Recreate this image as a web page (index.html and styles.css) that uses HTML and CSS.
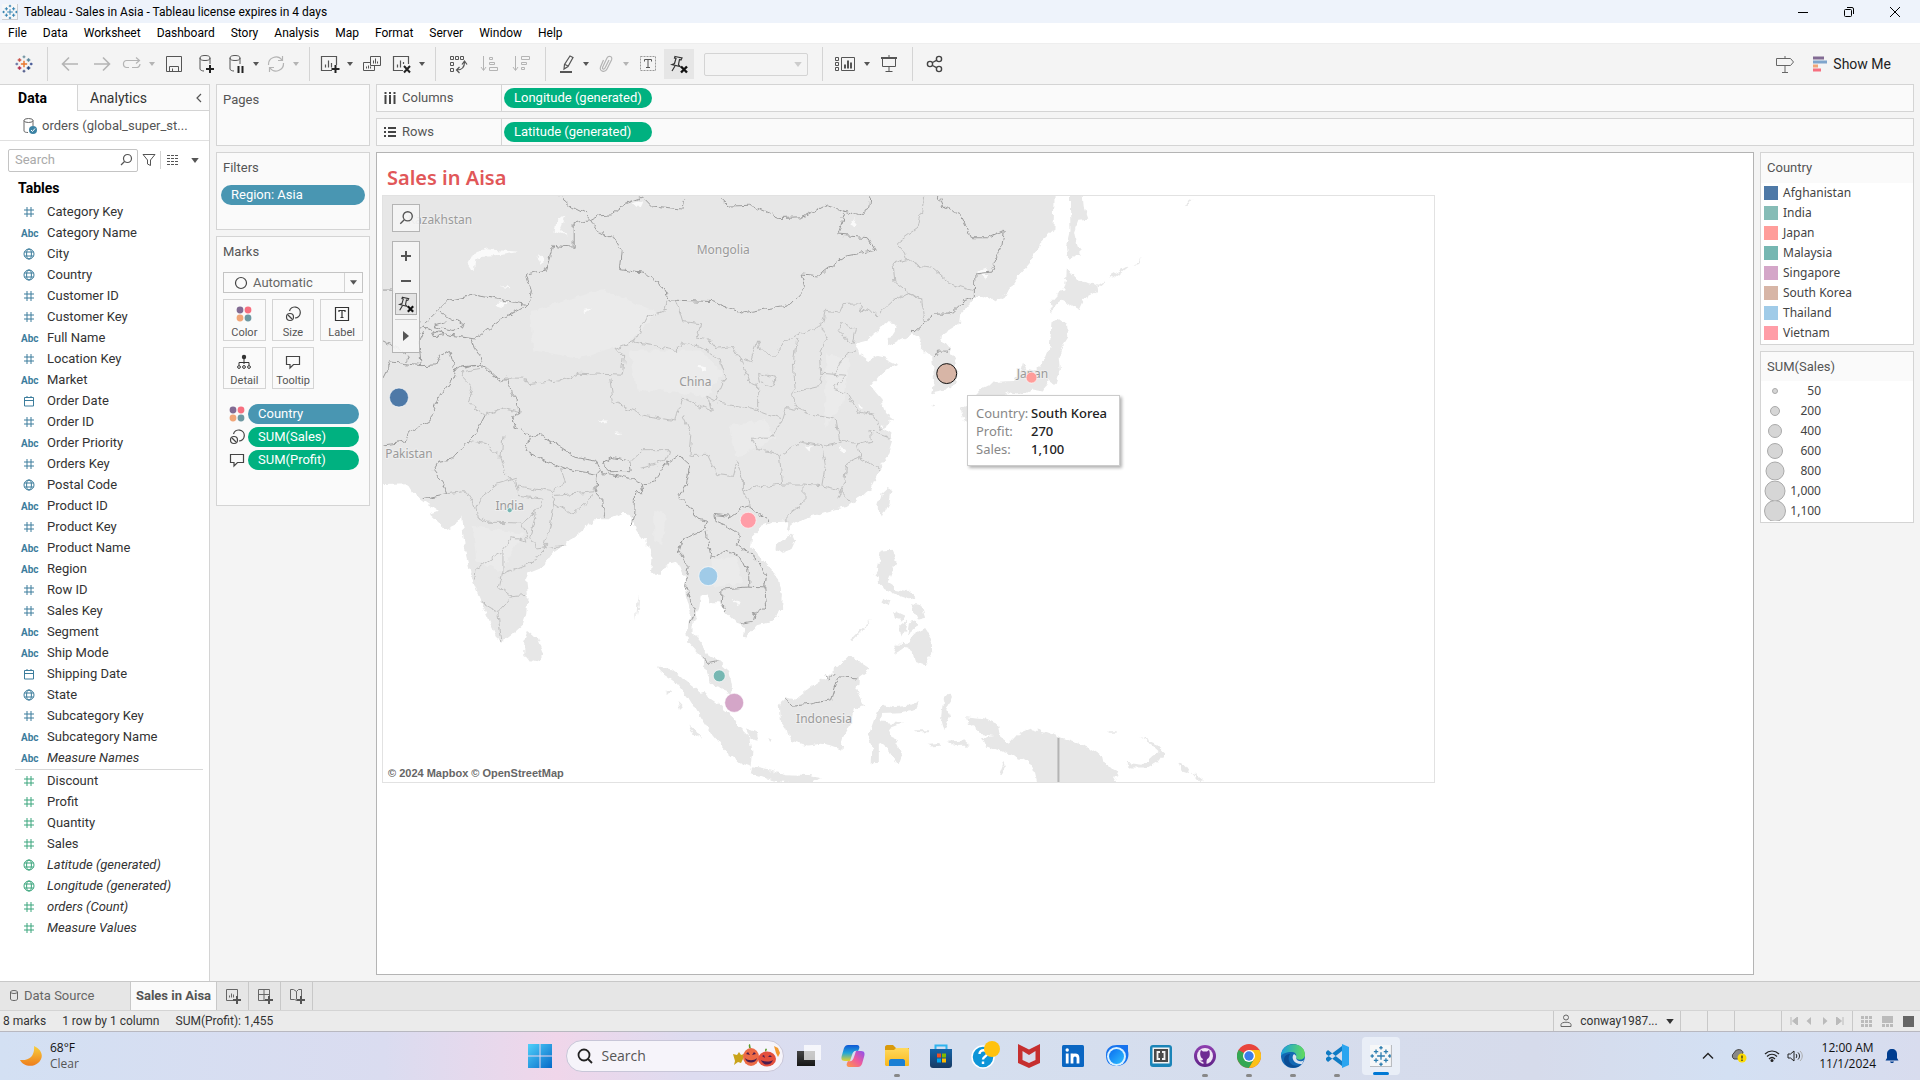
FILE: index.html
```html
<!DOCTYPE html>
<html lang="en">
<head>
<meta charset="utf-8">
<title>Tableau - Sales in Asia</title>
<link rel="stylesheet" href="styles.css">
</head>
<body>
<svg class="defs" aria-hidden="true">
  <defs>
    <linearGradient id="gWin" x1="0" y1="0" x2="1" y2="1"><stop offset="0" stop-color="#4fd0fa"/><stop offset="1" stop-color="#0669c8"/></linearGradient>
    <linearGradient id="gMoon" x1="0" y1="0" x2="0" y2="1"><stop offset="0" stop-color="#f8cf3c"/><stop offset="1" stop-color="#ee7d1c"/></linearGradient>
    <linearGradient id="gBag" x1="0" y1="0" x2="0" y2="1"><stop offset="0" stop-color="#1464a8"/><stop offset="1" stop-color="#173a63"/></linearGradient>
    <linearGradient id="gFolder" x1="0" y1="0" x2="0" y2="1"><stop offset="0" stop-color="#ffd95c"/><stop offset="1" stop-color="#f9b81d"/></linearGradient>
    <linearGradient id="gCop1" x1="0" y1="0" x2="0" y2="1"><stop offset="0" stop-color="#0f57d6"/><stop offset=".5" stop-color="#22a6d8"/><stop offset="1" stop-color="#e6d32c"/></linearGradient>
    <linearGradient id="gCop2" x1="1" y1="0" x2="0" y2="1"><stop offset="0" stop-color="#8a51f0"/><stop offset=".5" stop-color="#ee5b9c"/><stop offset="1" stop-color="#ff9a44"/></linearGradient>
    <linearGradient id="gDark" x1="0" y1="0" x2="0" y2="1"><stop offset="0" stop-color="#444"/><stop offset="1" stop-color="#161616"/></linearGradient>
    <linearGradient id="gBlue" x1="0" y1="0" x2="1" y2="1"><stop offset="0" stop-color="#0a6cf0"/><stop offset="1" stop-color="#2fc0ff"/></linearGradient>
    <linearGradient id="gEdge" x1="0" y1="0" x2="1" y2="0"><stop offset="0" stop-color="#1b9fe0"/><stop offset="1" stop-color="#62dc5a"/></linearGradient>
    <linearGradient id="gGit" x1="0" y1="0" x2="0" y2="1"><stop offset="0" stop-color="#8f3fb0"/><stop offset="1" stop-color="#5f2387"/></linearGradient>
    <symbol id="i-num" viewBox="0 0 12 12"><path d="M4 1v10M8 1v10M1 4h10M1 8h10" fill="none" stroke="currentColor"/></symbol>
    <symbol id="i-geo" viewBox="0 0 12 12"><g fill="none" stroke="currentColor"><circle cx="6" cy="6" r="5"/><ellipse cx="6" cy="6" rx="2.4" ry="5"/><path d="M1.5 4h9M1.5 8h9"/></g></symbol>
    <symbol id="i-date" viewBox="0 0 12 12"><path d="M1.500 2.500h9v8.500h-9zM1.500 5.500h9M4 1v2M8 1v2" fill="none" stroke="currentColor"/></symbol>
    <symbol id="i-caret" viewBox="0 0 6 4"><path d="M0 0h6L3 4z" fill="currentColor"/></symbol>
    <symbol id="i-color" viewBox="0 0 16 16"><circle cx="4" cy="4" r="3.400" fill="#826b93"/><circle cx="12" cy="4" r="3.400" fill="#f76f7f"/><circle cx="4" cy="12" r="3.400" fill="#f1a678"/><circle cx="12" cy="12" r="3.400" fill="#6d98a2"/></symbol>
    <symbol id="i-size" viewBox="0 0 16 16"><g fill="none" stroke="#444" stroke-width="1.200"><path d="M4.500 5A5.500 5.500 0 1 1 10 12"/><circle cx="5" cy="11" r="3.500"/><path d="M3 9l4 4"/></g></symbol>
    <symbol id="i-tip" viewBox="0 0 16 16"><path d="M1.500 2.500h13v8H8.500l-3.500 3.500v-3.500H1.500z" fill="none" stroke="#444" stroke-width="1.200"/></symbol>
    <symbol id="i-pin" viewBox="0 0 20 20"><path d="M6 2.500l7 1.500-1 2-1.500-.5-1 5 1.500 2L3 10.500l2.500-1 1.500-5-1.500-.5zM6 12l-3 5" fill="none" stroke="#333" stroke-width="1.200"/><path d="M12 12.500l6 6M18 12.500l-6 6" stroke="#111" stroke-width="2.400"/></symbol>
    <symbol id="i-search" viewBox="0 0 14 14"><circle cx="8.500" cy="5.500" r="4" fill="none" stroke="currentColor" stroke-width="1.200"/><path d="M5.500 8.500L2 12" stroke="currentColor" stroke-width="1.200"/></symbol>
    <symbol id="i-tab" viewBox="0 0 20 20"><g stroke-width="1.600"><path d="M10 6.500v7M6.500 10h7" stroke="#e8762c"/><path d="M5 3.500v4M3 5.500h4" stroke="#c9544b"/><path d="M15 3.500v4M13 5.500h4" stroke="#5b879b"/><path d="M5 12.500v4M3 14.500h4" stroke="#b3304f"/><path d="M15 12.500v4M13 14.500h4" stroke="#27477d"/><path d="M10 .5v3M8.500 2h3" stroke="#7a99a6"/><path d="M10 16.500v3M8.500 18h3" stroke="#5c6692"/><path d="M2 8.500v3M.5 10h3" stroke="#6e7ba8"/><path d="M18 8.500v3M16.500 10h3" stroke="#4a5c9a"/></g></symbol>
    <symbol id="i-tabblue" viewBox="0 0 20 20"><rect width="20" height="20" fill="#f6f7f8"/><path d="M10 6.500v7M6.500 10h7M5.500 4v4M3.500 6h4M14.500 4v4M12.500 6h4M5.500 12v4M3.500 14h4M14.500 12v4M12.500 14h4M10 1v3M8.500 2.500h3M10 16v3M8.500 17.500h3M2 8.500v3M.5 10h3M18 8.500v3M16.500 10h3" stroke="#2f7fb0" stroke-width="1.200"/><path d="M19.500 0v19.500H0" fill="none" stroke="#b9bcc0"/></symbol>
    <filter id="rough" x="-2%" y="-2%" width="104%" height="104%"><feTurbulence type="fractalNoise" baseFrequency=".14" numOctaves="2" seed="4"/><feDisplacementMap in="SourceGraphic" scale="7" xChannelSelector="R" yChannelSelector="G"/></filter>
  </defs>
</svg>

<header class="titlebar">
  <svg width="16" height="16"><use href="#i-tabblue"/></svg>
  <h1>Tableau - Sales in Asia - Tableau license expires in 4 days</h1>
  <div class="winctl">
    <button aria-label="Minimize"><svg width="12" height="12"><path d="M1 6.500h10" stroke="#000"/></svg></button>
    <button aria-label="Restore"><svg width="12" height="12"><g fill="none" stroke="#000"><rect x="1.500" y="3.500" width="7" height="7" rx="1"/><path d="M4 1.500h5a1.500 1.500 0 0 1 1.500 1.500v5"/></g></svg></button>
    <button aria-label="Close"><svg width="12" height="12"><path d="M1 1l10 10M11 1L1 11" stroke="#000"/></svg></button>
  </div>
</header>

<nav class="menubar">
  <button>File</button><button>Data</button><button>Worksheet</button><button>Dashboard</button><button>Story</button><button>Analysis</button><button>Map</button><button>Format</button><button>Server</button><button>Window</button><button>Help</button>
</nav>

<div class="toolbar">
  <button class="logo" aria-label="Start page"><svg width="18" height="18"><use href="#i-tab"/></svg></button>
  <div class="tg">
    <button class="t off" aria-label="Undo"><svg width="20" height="20"><path d="M18 10H3M9 3.500L2.500 10 9 16.500" fill="none" stroke="currentColor" stroke-width="1.600"/></svg></button>
    <button class="t off" aria-label="Redo"><svg width="20" height="20"><path d="M2 10h15M11 3.500l6.500 6.500-6.500 6.500" fill="none" stroke="currentColor" stroke-width="1.600"/></svg></button>
    <button class="t n off" aria-label="Replay"><svg width="20" height="20"><path d="M7 13.500H4.500a3 3 0 0 1-3-3v-1a3 3 0 0 1 3-3H17M14 3.500l3.500 3-3.500 3M18 10a3.500 3.500 0 0 1-3.500 3.500H10" fill="none" stroke="currentColor" stroke-width="1.200"/></svg></button>
    <button class="c off" aria-label="Replay menu"><svg width="6" height="4"><use href="#i-caret"/></svg></button>
    <button class="t" aria-label="Save"><svg width="20" height="20"><path d="M2.500 2.500h15v15h-15zM5.500 17.500v-5h9v5M8.500 14.500v3" fill="none" stroke="currentColor"/></svg></button>
    <button class="t" aria-label="New data source"><svg width="20" height="20"><g fill="none" stroke="currentColor"><ellipse cx="9" cy="4" rx="5" ry="2.500"/><path d="M4 4v11c0 1 2 2 4 2M14 4v6"/></g><path d="M14 11v8M10 15h8" stroke="#222" stroke-width="2"/></svg></button>
    <button class="t n" aria-label="Pause updates"><svg width="20" height="20"><g fill="none" stroke="currentColor"><ellipse cx="9" cy="4" rx="5" ry="2.500"/><path d="M4 4v11c0 1 2 2 4 2M14 4v6"/></g><path d="M12.500 12v7M16.500 12v7" stroke="#222" stroke-width="2"/></svg></button>
    <button class="c" aria-label="Pause menu"><svg width="6" height="4"><use href="#i-caret"/></svg></button>
    <button class="t n off" aria-label="Refresh"><svg width="20" height="20"><path d="M2.500 11A7.500 7.500 0 0 1 16 6M17.500 9A7.500 7.500 0 0 1 4 14M16.500 2v4.500H12M3.500 18v-4.500H8" fill="none" stroke="currentColor" stroke-width="1.200"/></svg></button>
    <button class="c off" aria-label="Refresh menu"><svg width="6" height="4"><use href="#i-caret"/></svg></button>
  </div>
  <div class="tg">
    <button class="t n" aria-label="New worksheet"><svg width="20" height="20"><path d="M12 16.500H1.500v-14h15V11M5.500 13.500v-3M8.500 13.500v-7M11.500 13.500V9" fill="none" stroke="currentColor" stroke-width="1.200"/><path d="M15.500 11v8M11.500 15h8" stroke="#222" stroke-width="2"/></svg></button>
    <button class="c" aria-label="New worksheet menu"><svg width="6" height="4"><use href="#i-caret"/></svg></button>
    <button class="t" aria-label="Duplicate"><svg width="20" height="20"><path d="M8.500 2.500h10v9h-10zM8.500 8.500h-7v8h11v-5M11.500 9.500v-3M13.500 9.500v-5M15.500 9.500v-2M4.500 14.500v-2M6.500 14.500v-3M8.500 14.500v-2" fill="none" stroke="currentColor"/></svg></button>
    <button class="t n" aria-label="Clear sheet"><svg width="20" height="20"><path d="M11 16.500H1.500v-14h15V10M5.500 13.500v-3M8.500 13.500v-7M11.500 10V8" fill="none" stroke="currentColor" stroke-width="1.200"/><path d="M12 12l6 6.500M18 12l-6 6.500" stroke="#222" stroke-width="2"/></svg></button>
    <button class="c" aria-label="Clear menu"><svg width="6" height="4"><use href="#i-caret"/></svg></button>
  </div>
  <div class="tg">
    <button class="t" aria-label="Swap rows and columns"><svg width="20" height="20"><path d="M2.500 2.500h3v3h-3zM7.500 2.500h3v3h-3zM12.500 2.500h3v3h-3zM2.500 8.500h3v3h-3zM2.500 14.500h3v3h-3z" fill="none" stroke="currentColor"/><path d="M16.500 8c0 5-2 8-7.500 8M14 10.500L16.500 7l2.500 3.500M11.500 13L8.500 16l3 3" fill="none" stroke="currentColor" stroke-width="1.200"/></svg></button>
    <button class="t off" aria-label="Sort ascending"><svg width="20" height="20"><path d="M3.500 2v14M1 13l2.500 3.500L6 13M9.500 3.500h3v2h-3zM9.500 8.500h5v2h-5zM9.500 13.500h8v3h-8z" fill="none" stroke="currentColor"/></svg></button>
    <button class="t off" aria-label="Sort descending"><svg width="20" height="20"><path d="M3.500 2v14M1 13l2.500 3.500L6 13M9.500 2.500h8v3h-8zM9.500 8.500h5v2h-5zM9.500 13.500h3v2h-3z" fill="none" stroke="currentColor"/></svg></button>
  </div>
  <div class="tg">
    <button class="t n" aria-label="Highlight"><svg width="20" height="20"><path d="M14 2l3 1.500-5 9-4 2.500.5-4.500zM9 10.500l3 1.500" fill="none" stroke="currentColor" stroke-width="1.200"/><path d="M4 18h12" stroke="currentColor" stroke-width="2"/></svg></button>
    <button class="c" aria-label="Highlight menu"><svg width="6" height="4"><use href="#i-caret"/></svg></button>
    <button class="t n off" aria-label="Group members"><svg width="20" height="20"><path d="M13 6l-4 8c-1 2-3 1-2.500-.5L11 4c1.500-3 6-1.500 4.500 2L11 15c-2 4-8 2.500-6.500-2l3-7" fill="none" stroke="currentColor" stroke-width="1.200"/></svg></button>
    <button class="c off" aria-label="Group menu"><svg width="6" height="4"><use href="#i-caret"/></svg></button>
    <button class="t" aria-label="Show mark labels"><svg width="20" height="20"><rect x="2.500" y="2.500" width="15" height="14" fill="none" stroke="#999" stroke-dasharray="2 1"/><path d="M6.500 7.500v-2h7v2M10 5.500v8M8 13.500h4" fill="none" stroke="#555"/></svg></button>
    <button class="t on" aria-label="Fix axes"><svg width="20" height="20"><use href="#i-pin"/></svg></button>
    <span class="fit"><select aria-label="Fit" disabled><option></option></select><svg width="8" height="5"><use href="#i-caret"/></svg></span>
  </div>
  <div class="tg">
    <button class="t" aria-label="Show or hide cards"><svg width="20" height="20"><path d="M.5 3.500h3v3h-3zM.5 8.500h3v3h-3zM.5 13.500h3v3h-3zM6.500 3.500h13v13h-13z" fill="none" stroke="#555"/><path d="M10 14.500v-4M13 14.500v-8M16 14.500v-6" stroke="#555" stroke-width="2"/></svg></button>
    <button class="c" aria-label="Cards menu"><svg width="6" height="4"><use href="#i-caret"/></svg></button>
    <button class="t" aria-label="Presentation mode"><svg width="20" height="20"><path d="M2 4h16" stroke="#555" stroke-width="2"/><path d="M3.500 4v8.500h13V4M10 12.500v5M6.500 17.500h7M10 1v2" fill="none" stroke="#555"/></svg></button>
  </div>
  <div class="tg">
    <button class="t" aria-label="Share"><svg width="20" height="20"><g fill="none" stroke="#444" stroke-width="1.400"><circle cx="5" cy="10" r="2.600"/><circle cx="14" cy="5" r="2.600"/><circle cx="14" cy="15" r="2.600"/><path d="M7.500 8.500l4-2.200M7.500 11.500l4 2.200"/></g></svg></button>
  </div>
  <div class="tr">
    <button class="t" aria-label="Guide"><svg width="20" height="20"><path d="M1.500 4.500h14l3 3.500-3 3.500h-14zM10 2v2.500M10 11.500v7M7 18.500h6" fill="none" stroke="#666"/></svg></button>
    <button class="showme"><svg width="16" height="16"><path d="M0 2h11" stroke="#826b93" stroke-width="3"/><path d="M0 6h14" stroke="#7fa5cc" stroke-width="3"/><path d="M0 10h5" stroke="#f1a678" stroke-width="3"/><path d="M0 14h8" stroke="#f76f7f" stroke-width="3"/></svg>Show Me</button>
  </div>
</div>

<main class="main">
  <aside class="data">
    <div class="dtabs"><button class="sel">Data</button><button class="ana">Analytics<svg width="6" height="10"><path d="M5 1L1 5l4 4" fill="none" stroke="#555" stroke-width="1.200"/></svg></button></div>
    <div class="source"><svg width="16" height="18"><g fill="none" stroke="#666"><ellipse cx="6.500" cy="3.500" rx="4.500" ry="2"/><path d="M2 3.500V14c0 1 2 1.500 4 1.500M11 3.500V9"/></g><circle cx="11" cy="13" r="4" fill="#3c83a5"/><path d="M9 13l1.500 1.500L13 11.500" fill="none" stroke="#fff"/></svg><span>orders (global_super_st...</span></div>
    <div class="find">
      <label class="box"><input type="text" placeholder="Search" aria-label="Search fields"><svg width="14" height="14"><use href="#i-search"/></svg></label>
      <button aria-label="Filter"><svg width="14" height="14"><path d="M1 1.500h12L8.500 7v5.500l-3-1.500V7z" fill="none" stroke="#555"/></svg></button>
      <button class="lst" aria-label="View"><svg width="12" height="12"><path d="M0 1.500h12M0 4.500h12M0 7.500h12M0 10.500h12" stroke="#555" stroke-dasharray="3 1" stroke-width="1.200"/></svg><svg width="8" height="5"><use href="#i-caret"/></svg></button>
    </div>
    <h2>Tables</h2>
    <ul class="fields dim">
      <li><svg><use href="#i-num"/></svg>Category Key</li>
      <li><b>Abc</b>Category Name</li>
      <li><svg><use href="#i-geo"/></svg>City</li>
      <li><svg><use href="#i-geo"/></svg>Country</li>
      <li><svg><use href="#i-num"/></svg>Customer ID</li>
      <li><svg><use href="#i-num"/></svg>Customer Key</li>
      <li><b>Abc</b>Full Name</li>
      <li><svg><use href="#i-num"/></svg>Location Key</li>
      <li><b>Abc</b>Market</li>
      <li><svg><use href="#i-date"/></svg>Order Date</li>
      <li><svg><use href="#i-num"/></svg>Order ID</li>
      <li><b>Abc</b>Order Priority</li>
      <li><svg><use href="#i-num"/></svg>Orders Key</li>
      <li><svg><use href="#i-geo"/></svg>Postal Code</li>
      <li><b>Abc</b>Product ID</li>
      <li><svg><use href="#i-num"/></svg>Product Key</li>
      <li><b>Abc</b>Product Name</li>
      <li><b>Abc</b>Region</li>
      <li><svg><use href="#i-num"/></svg>Row ID</li>
      <li><svg><use href="#i-num"/></svg>Sales Key</li>
      <li><b>Abc</b>Segment</li>
      <li><b>Abc</b>Ship Mode</li>
      <li><svg><use href="#i-date"/></svg>Shipping Date</li>
      <li><svg><use href="#i-geo"/></svg>State</li>
      <li><svg><use href="#i-num"/></svg>Subcategory Key</li>
      <li><b>Abc</b>Subcategory Name</li>
      <li><b>Abc</b><i>Measure Names</i></li>
    </ul>
    <ul class="fields mea">
      <li><svg><use href="#i-num"/></svg>Discount</li>
      <li><svg><use href="#i-num"/></svg>Profit</li>
      <li><svg><use href="#i-num"/></svg>Quantity</li>
      <li><svg><use href="#i-num"/></svg>Sales</li>
      <li><svg><use href="#i-geo"/></svg><i>Latitude (generated)</i></li>
      <li><svg><use href="#i-geo"/></svg><i>Longitude (generated)</i></li>
      <li><svg><use href="#i-num"/></svg><i>orders (Count)</i></li>
      <li><svg><use href="#i-num"/></svg><i>Measure Values</i></li>
    </ul>
  </aside>

  <div class="cards">
    <section class="card pages"><h3>Pages</h3></section>
    <section class="card filters"><h3>Filters</h3><button class="pill blue">Region: Asia</button></section>
    <section class="card marks">
      <h3>Marks</h3>
      <button class="marktype"><svg width="14" height="14"><circle cx="7" cy="7" r="5.500" fill="none" stroke="#444" stroke-width="1.200"/></svg><span>Automatic</span><em><svg width="7" height="5"><use href="#i-caret"/></svg></em></button>
      <div class="shelfgrid">
        <button><svg><use href="#i-color"/></svg>Color</button>
        <button><svg><use href="#i-size"/></svg>Size</button>
        <button><svg viewBox="0 0 16 16"><path d="M1.500 1.500h13v13h-13zM5 6V4.500h6V6M8 4.500v7M6.500 11.500h3" fill="none" stroke="#333" stroke-width="1.200"/></svg>Label</button>
        <button><svg viewBox="0 0 16 16"><circle cx="8" cy="3" r="2.200" fill="#333"/><path d="M8 4v6M3 11V8.500h10V11" fill="none" stroke="#333"/><g fill="none" stroke="#333"><circle cx="3" cy="13" r="1.400"/><circle cx="8" cy="13" r="1.400"/><circle cx="13" cy="13" r="1.400"/></g></svg>Detail</button>
        <button><svg><use href="#i-tip"/></svg>Tooltip</button>
      </div>
      <ul class="enc">
        <li><svg><use href="#i-color"/></svg><button class="pill blue">Country</button></li>
        <li><svg><use href="#i-size"/></svg><button class="pill">SUM(Sales)</button></li>
        <li><svg><use href="#i-tip"/></svg><button class="pill">SUM(Profit)</button></li>
      </ul>
    </section>
  </div>

  <div class="work">
    <div class="shelf"><span><svg width="12" height="12"><path d="M1.500 3v9M6 3v9M10.500 3v9M1.500 0v2M6 0v2M10.500 0v2" stroke="#444" stroke-width="2"/></svg>Columns</span><button class="pill">Longitude (generated)</button></div>
    <div class="shelf"><span><svg width="12" height="12"><path d="M0 2h2M0 6h2M0 10h2M4 2h8M4 6h8M4 10h8" stroke="#444" stroke-width="2"/></svg>Rows</span><button class="pill">Latitude (generated)</button></div>
    <div class="viewrow">
      <section class="view">
        <h2>Sales in Aisa</h2>
        <div class="map">
          <svg class="geo" viewBox="1 1 1053 587" role="img" aria-label="Map of Asia">
            <g filter="url(#rough)"><g transform="translate(-2 -5) scale(.3571 .3827)">
              <g class="land">
                <path d="M-40-20H1895L1890 105 1850 140 1825 190 1785 235 1760 270 1725 290 1690 280 1668 280 1655 300 1632 320 1628 350 1580 378 1578 392 1598 415 1612 440 1622 480 1618 505 1590 525 1550 532 1555 500 1553 470 1550 440 1535 430 1515 415 1520 388 1495 378 1450 398 1425 412 1430 390 1447 365 1440 348 1418 346 1395 372 1365 395 1335 402 1345 428 1370 445 1395 435 1420 440 1452 455 1425 470 1400 490 1378 515 1405 545 1420 580 1437 605 1405 622 1435 640 1440 660 1430 690 1410 715 1395 745 1375 785 1340 810 1310 830 1260 840 1210 855 1165 870 1150 880 1150 900 1140 885 1145 868 1100 870 1070 880 1045 905 1042 930 1060 955 1090 985 1120 1020 1128 1060 1125 1105 1100 1130 1060 1140 1030 1172 1018 1170 1025 1145 1000 1135 970 1105 950 1080 925 1080 920 1062 900 1065 895 1100 880 1130 880 1160 905 1190 920 1215 950 1235 980 1260 988 1300 985 1320 960 1310 925 1290 915 1260 905 1225 865 1185 862 1150 872 1105 858 1060 855 1020 835 975 800 985 790 1005 760 1005 765 965 745 920 720 890 700 850 680 845 640 862 600 862 580 885 540 915 490 945 460 985 420 1000 410 1020 415 1060 410 1110 400 1140 370 1165 342 1185 325 1170 300 1115 275 1060 255 1010 240 950 228 855 215 875 185 888 140 850 165 842 130 820 115 810 90 790 75 768-40 772Z"/>
                <path d="M415 1152L440 1172 455 1210 445 1230 420 1238 405 1220 405 1180Z"/>
                <path d="M1425 778L1436 785 1430 820 1410 857 1395 830 1405 795Z"/>
                <path d="M1115 920L1150 905 1168 915 1155 940 1130 950 1113 938Z"/>
                <path d="M1405 945L1435 942 1450 975 1435 1005 1425 1030 1450 1045 1480 1050 1500 1065 1480 1070 1450 1060 1415 1045 1400 1020 1388 1005 1398 990Z"/>
                <path d="M1415 1065L1430 1075 1425 1090 1410 1080ZM1440 1100L1475 1115 1465 1130 1445 1125ZM1490 1085L1520 1090 1530 1120 1510 1125 1500 1105ZM1460 1140L1480 1125 1475 1150 1462 1170ZM1485 1135L1505 1130 1500 1150 1480 1165Z"/>
                <path d="M1440 1220L1450 1188 1480 1190 1500 1165 1530 1150 1548 1175 1550 1215 1530 1242 1500 1232 1495 1205 1470 1198Z"/>
                <path d="M1323 1178L1380 1122 1350 1160 1328 1182Z"/>
                <path d="M1122 1350L1135 1328 1165 1335 1215 1300 1255 1275 1300 1235 1320 1215 1350 1240 1375 1255 1345 1275 1340 1310 1362 1352 1330 1360 1320 1400 1300 1430 1295 1465 1265 1455 1240 1450 1200 1455 1150 1440 1140 1410 1125 1390Z"/>
                <path d="M780 1248L820 1255 860 1285 900 1315 940 1340 980 1370 1000 1400 1040 1435 1045 1470 1040 1510 1010 1500 970 1470 930 1425 900 1380 870 1335 830 1290 790 1265Z"/>
                <path d="M1045 1512L1090 1520 1140 1530 1200 1532 1240 1538 1200 1560 1100 1545 1040 1530Z"/>
                <path d="M1395 1365L1410 1348 1440 1355 1490 1350 1515 1338 1505 1360 1460 1368 1410 1370 1405 1392 1440 1395 1472 1395 1430 1410 1445 1440 1465 1480 1455 1505 1435 1480 1415 1445 1400 1450 1400 1500 1380 1502 1382 1460 1368 1440 1380 1405Z"/>
                <path d="M1580 1340L1600 1318 1605 1330 1590 1350 1600 1380 1585 1415 1575 1380ZM1500 1415H1545L1540 1420H1500ZM1540 1450L1570 1448 1575 1458 1545 1460ZM1590 1445L1640 1442 1658 1455 1620 1456ZM1738 1530L1750 1500 1755 1515 1745 1532Z"/>
                <path d="M1645 1378L1700 1385 1735 1400 1742 1435 1765 1450 1790 1425 1830 1410 1870 1420 1930 1440 1990 1460 2030 1485 2035 1505 2072 1522 2060 1550 2100 1575H1850L1835 1510 1800 1490 1760 1475 1700 1455 1690 1435 1725 1430 1690 1425 1665 1405 1650 1395Z"/>
                <path d="M2090 1500L2140 1505 2165 1485 2185 1470 2200 1475 2185 1495 2150 1515 2110 1515ZM2130 1432L2175 1448 2200 1470 2195 1478 2165 1452ZM2240 1495L2260 1510 2275 1530 2250 1522ZM2280 1525L2310 1545 2300 1548ZM2045 1420H2065V1424H2045Z"/>
                <path d="M1936-10H1970L1975 40 1988 75 1960 78 1948 110 1955 150 1970 170 1955 165 1935 180 1928 150 1938 110Z"/>
                <path d="M1928 204L1960 240 2008 250 2010 268 1975 285 1962 312 1930 295 1910 290 1895 300 1885 325 1880 295 1900 275 1918 265 1925 240Z"/>
                <path d="M1885 345L1905 335 1928 350 1932 385 1915 410 1905 440 1908 470 1895 510 1880 500 1860 525 1830 520 1800 535 1770 530 1740 545 1720 560 1700 550 1680 560 1660 550 1690 520 1730 502 1780 500 1800 470 1805 450 1815 470 1835 475 1865 445 1880 410Z"/>
                <path d="M1630 570L1655 560 1670 590 1650 610 1640 600ZM2010 250L2035 235 2030 242 2012 256ZM2045 228L2090 205 2100 203 2060 232ZM2115 195L2135 180 2125 195ZM2258 40L2285 20 2270 38ZM1547 560H1560V564H1547Z"/>
                <path d="M718 1130L722 1085 727 1062 726 1090ZM835 1340L850 1355 842 1362ZM865 1400L885 1415 905 1440 880 1425ZM1030 1410L1055 1420 1060 1440 1040 1435ZM1090 1435L1100 1440 1095 1446ZM795 1310L815 1318 808 1322Z"/>
              </g>
              <g class="plain">
                <path d="M420 320L620 260 780 320 700 400 560 440 430 420ZM700 420L900 420 960 480 920 540 720 520ZM980 620L1080 600 1110 650 1000 700ZM1250 430L1320 440 1300 560 1250 620ZM770 840L800 850 795 930 770 920ZM260 880L400 900 340 1000 270 970ZM930 970L1000 960 1020 1030 940 1040Z"/>
              </g>
              <g class="lake">
                <path d="M248 192L262 165 300 155 390 162 340 170 290 172 268 185 262 212ZM495 80L520 70 505 105 525 122 490 110ZM705 35L735 28 725 48ZM318 300L365 290 345 308ZM565 315L595 310 575 322ZM890 460L918 465 905 475ZM1320 90L1335 72 1330 95ZM618 600L638 602 628 612ZM660 632L680 634 664 638ZM445 168L460 180 455 195 442 180ZM1675 215L1705 205 1700 232ZM990 1068L1010 1080 1000 1084ZM1190 670L1205 685 1215 672ZM1290 672L1310 680 1298 692ZM1345 560L1362 570 1350 575ZM335 252H365V257Z"/>
              </g>
              <g class="prov">
                <path d="M805 290L800 315 745 335 715 395 660 415 685 440 680 485 560 480 500 500 415 510 400 490 365 490 340 500 300 465 235 475 225 485 260 520 250 560 295 590 350 570 390 580"/>
                <path d="M832 290L850 345 900 350 890 385 920 390 940 415 990 410 1010 440 1040 450 1060 395 1070 420 1105 435 1140 395 1170 380 1240 355 1250 315 1290 320 1300 300 1345 298 1350 320 1375 310 1395 330 1440 290 1480 270 1520 285 1530 345"/>
                <path d="M715 398L830 420 850 400 900 410 955 445 970 490 940 550 920 540 930 580 850 545 835 585 830 605 740 590 655 555 645 495"/>
                <path d="M1170 390L1160 450 1165 520 1155 530 1170 570 1220 590 1280 600 1290 655 1340 665 1380 655 1375 630 1435 650M1240 360L1255 390 1235 420 1240 480 1230 515 1160 530M1240 480L1305 485 1275 520 1310 530 1340 580 1385 590 1405 630M1285 370L1300 348 1335 365 1325 400 1295 380ZM1335 420L1300 440 1275 485"/>
                <path d="M1010 440L1035 500 1060 510 1060 575 950 555M1060 480L1110 490 1100 515 1065 505ZM1060 575L1130 600 1140 570 1170 575M1130 600L1100 650 1040 650 1060 680 1120 690 1130 770 1040 780 1020 790 1020 750 1000 710 990 750 945 745 920 695 870 695 875 640 850 590"/>
                <path d="M1130 690L1180 660 1240 670 1290 660M1240 670L1250 720 1240 775 1190 770 1130 770M1340 665L1350 700 1310 715 1305 760 1285 810M1350 700L1400 730M1240 775L1290 785 1320 815M1190 770L1190 820 1145 850 1145 868M1020 790L1040 830"/>
                <path d="M1530 14L1510 100 1450 140 1475 165 1480 180 1440 190 1445 240 1480 265M1480 180L1510 200 1550 205 1600 245 1670 265M1480 270L1520 285"/>
                <path d="M190 795L240 790 265 825 270 855 300 870 400 872 440 840 460 810 390 800 380 755 330 770 290 800 270 830M345 645L340 700 350 740 385 775 480 790 520 770 510 730M480 790L490 820 540 850 600 800M490 820L480 870 460 940 440 960M440 840L420 910 440 940 520 930M400 872L415 920 370 910 340 950 270 990 265 1020M345 950L345 1000 335 1040 370 1065 410 1062M345 1005L440 970M285 1080L330 1105 342 1185M330 1105L370 1065M250 655L300 665 335 700M610 745L600 790 490 800M705 710L740 680 810 680 800 710 730 730"/>
              </g>
              <g class="nat">
                <path d="M500 14L540 45 575 62 590 78 610 68 650 65 690 35 740 18 765 42 850 50 855 22M590 78L545 85 545 150 485 145 465 210 410 220 425 265 415 300 265 275 190 290 125 350M590 78L610 105 660 130 680 160 675 208 750 220 785 245 812 288 930 292 1020 322 1150 300 1195 255 1185 220 1230 225 1300 175 1390 158 1370 125 1285 118 1305 60"/>
                <path d="M955 20L980 42 1040 40 1120 72 1190 70 1250 40 1305 55 1340 65 1375 45 1378 15M1565 10L1580 45 1630 65 1660 125 1705 125 1752 105 1745 150 1715 215 1670 220 1668 280 1640 290 1600 325 1555 325 1495 375"/>
                <path d="M415 300L340 340 265 390 195 380 115 360M165 320L205 340 240 350 205 368 150 355 185 345M145 375L170 368 180 382 150 384ZM8 262H35L60 290 115 345M8 395L60 420 80 435 75 450M255 390L265 415 285 440 280 458 210 470 195 420 170 432 155 458 115 460 30 450 8 490M115 460L110 400 125 370M280 458L340 500 360 500 365 530 385 550 390 585 370 595 380 620 420 645 445 640 500 670 550 700 605 710 620 735 610 745 520 730 480 715 410 685 420 645M8 668L70 660 80 635 140 605 165 545 205 490 215 465 280 458M295 590L275 625 245 660 200 705 165 710 150 735 175 765 188 795 120 808"/>
                <path d="M625 715L650 700 700 710 705 735 640 735ZM620 740L650 745 700 755 735 770 740 790 715 790 712 850 705 880M610 745L605 790 625 810 630 858M735 770L770 765 800 720 840 695 870 720 860 770 840 800 870 830 890 865 920 870 905 895 850 915 840 945 865 990 855 1035 885 1100 870 1135"/>
                <path d="M940 850L985 855 1030 825 1065 850 1095 868M940 850L945 870 980 885 1015 905 1000 925 1060 970 1085 1010 1080 1042 1030 1040 960 1045 958 1080 970 1105M915 895L930 965 970 945 1010 960 1035 1010 1035 1040M1080 1042L1085 1090 1050 1110 1045 1130 1010 1135M905 1220L925 1240 950 1235M1135 1330L1160 1352 1215 1345 1265 1335 1285 1275 1340 1278M1245 1270L1260 1280 1275 1265M1555 437L1565 422 1590 422 1598 415"/>
              </g>
            </g></g>
            <path d="M678 544V590" stroke="#b4b4b4" stroke-width="2"/>
            <g class="names">
              <text x="58" y="29">Kazakhstan</text><text x="342" y="59">Mongolia</text><text x="314" y="191">China</text><text x="27" y="264">Pakistan</text><text x="128" y="316">India</text><text x="443" y="529">Indonesia</text><text x="652" y="183">Japan</text>
            </g>
            <g class="dots">
              <circle cx="17" cy="203" r="9.500" fill="#4e79a7"/><circle cx="128" cy="316" r="2.500" fill="#76b7b2"/><circle cx="367" cy="326" r="8" fill="#ff9da7"/><circle cx="327" cy="382" r="9.500" fill="#a0cbe8"/><circle cx="338" cy="482" r="6" fill="#76b7b2"/><circle cx="353" cy="509" r="9.500" fill="#d4a6c8"/><circle cx="651" cy="183" r="5.500" fill="#ff9d9a"/>
              <circle class="hot" cx="566" cy="179" r="10"/>
            </g>
          </svg>
          <div class="mapctl">
            <button class="solo" aria-label="Search map"><svg width="16" height="16"><use href="#i-search"/></svg></button>
            <div class="zoom">
              <button aria-label="Zoom in"><svg width="12" height="12"><path d="M6 1v10M1 6h10" stroke="#555" stroke-width="2"/></svg></button>
              <button aria-label="Zoom out"><svg width="12" height="12"><path d="M1 6h10" stroke="#555" stroke-width="2"/></svg></button>
              <button class="pin" aria-label="Reset zoom"><svg width="18" height="18"><use href="#i-pin"/></svg></button>
              <button class="play" aria-label="More tools"><svg width="8" height="10"><path d="M1 0l6 5-6 5z" fill="#555"/></svg></button>
            </div>
          </div>
          <small>© 2024 Mapbox © OpenStreetMap</small>
          <dl class="tip"><dt>Country:</dt><dd>South Korea</dd><dt>Profit:</dt><dd>270</dd><dt>Sales:</dt><dd>1,100</dd></dl>
        </div>
      </section>
      <aside class="legends">
        <section class="legend">
          <h3>Country</h3>
          <ul>
            <li><i class="k1"></i>Afghanistan</li><li><i class="k2"></i>India</li><li><i class="k3"></i>Japan</li><li><i class="k4"></i>Malaysia</li><li><i class="k5"></i>Singapore</li><li><i class="k6"></i>South Korea</li><li><i class="k7"></i>Thailand</li><li><i class="k8"></i>Vietnam</li>
          </ul>
        </section>
        <section class="legend sizes">
          <h3>SUM(Sales)</h3>
          <ul>
            <li><svg><circle cx="11" cy="10" r="2.500"/></svg><span>50</span></li>
            <li><svg><circle cx="11" cy="10" r="4.500"/></svg><span>200</span></li>
            <li><svg><circle cx="11" cy="10" r="6.500"/></svg><span>400</span></li>
            <li><svg><circle cx="11" cy="10" r="7.500"/></svg><span>600</span></li>
            <li><svg><circle cx="11" cy="10" r="9"/></svg><span>800</span></li>
            <li><svg><circle cx="11" cy="10" r="10"/></svg><span>1,000</span></li>
            <li><svg><circle cx="11" cy="10" r="10.500"/></svg><span>1,100</span></li>
          </ul>
        </section>
      </aside>
    </div>
  </div>
</main>

<nav class="sheets">
  <button class="ds"><svg width="10" height="14"><g fill="none" stroke="#666"><ellipse cx="5" cy="3" rx="3.500" ry="1.500"/><path d="M1.500 3v7c0 2 7 2 7 0V3"/></g></svg>Data Source</button>
  <button class="cur">Sales in Aisa</button>
  <button class="add" aria-label="New worksheet"><svg width="16" height="16"><path d="M9 12.500H1.500v-11h11V8M4.500 9.500v-2M6.500 9.500v-4M8.500 9.500v-3" fill="none" stroke="#666"/><path d="M12 8v8M8 12h8" stroke="#555" stroke-width="2"/></svg></button>
  <button class="add" aria-label="New dashboard"><svg width="16" height="16"><path d="M9 12.500H1.500v-11h11V8M1.500 6.500h11M7 1.500v11" fill="none" stroke="#666"/><path d="M12 8v8M8 12h8" stroke="#555" stroke-width="2"/></svg></button>
  <button class="add" aria-label="New story"><svg width="16" height="16"><path d="M8 12.500l-2.500-1H1.500v-10h3l3 2 2-2h3V8M7.500 3.500v8" fill="none" stroke="#666"/><path d="M12 8v8M8 12h8" stroke="#555" stroke-width="2"/></svg></button>
</nav>

<footer class="status">
  <div class="facts"><span>8 marks</span><span>1 row by 1 column</span><span>SUM(Profit): 1,455</span></div>
  <button class="user"><svg width="12" height="14"><g fill="none" stroke="#666"><circle cx="6" cy="3.500" r="2.500"/><path d="M1 12.500v-2c0-3 10-3 10 0v2z"/></g></svg>conway1987...<svg width="8" height="5"><use href="#i-caret"/></svg></button>
  <i class="cell"></i><i class="cell"></i><i class="cell wide"></i>
  <div class="nav">
    <button aria-label="First"><svg width="8" height="8"><path d="M1 0v8M7.500 0v8L2.500 4z" fill="#bbb" stroke="#bbb"/></svg></button>
    <button aria-label="Previous"><svg width="8" height="8"><path d="M6 0v8L1.500 4z" fill="#bbb"/></svg></button>
    <button aria-label="Next"><svg width="8" height="8"><path d="M2 0v8L6.500 4z" fill="#bbb"/></svg></button>
    <button aria-label="Last"><svg width="8" height="8"><path d="M7 0v8M.5 0v8L5.500 4z" fill="#bbb" stroke="#bbb"/></svg></button>
  </div>
  <div class="modes">
    <button aria-label="Sheet sorter"><svg width="11" height="11"><path d="M0 1.500h11M0 5.500h11M0 9.500h11" stroke="#bbb" stroke-width="3" stroke-dasharray="3 1"/></svg></button>
    <button aria-label="Filmstrip"><svg width="11" height="11"><path d="M0 0h11v7H0z" fill="#bbb"/><path d="M0 9.500h11" stroke="#bbb" stroke-width="3" stroke-dasharray="3 1"/></svg></button>
    <button aria-label="Tabs"><svg width="11" height="11"><path d="M0 0h11v11H0z" fill="#666"/></svg></button>
  </div>
</footer>

<div class="taskbar">
  <div class="weather"><svg width="22" height="22"><path d="M14 1c9 4 10 12 4 17S3 21 0 15c10 1 15-5 14-14z" fill="url(#gMoon)"/></svg><p>68°F<br><span>Clear</span></p></div>
  <div class="apps">
    <button aria-label="Start"><svg width="24" height="24"><path d="M0 0h11.500v11.500H0zM12.500 0H24v11.500H12.500zM0 12.500h11.500V24H0zM12.500 12.500H24V24H12.500z" fill="url(#gWin)"/></svg></button>
    <label class="tsearch"><svg width="16" height="16"><circle cx="7" cy="7" r="5.500" fill="none" stroke="#222" stroke-width="1.800"/><path d="M11 11l4 4" stroke="#222" stroke-width="1.800"/></svg><input type="text" placeholder="Search" aria-label="Search Windows"><svg width="50" height="24"><path d="M2 10l4 1 2-3 2 3 3-1-1 5-2 4-3-1-4 3 1-4z" fill="#c9a31a"/><path d="M18 4c0-3-1-3 1-4l1 5z" fill="#5c9a2c"/><ellipse cx="20" cy="13" rx="8" ry="9" fill="#ec6a45"/><path d="M15 10l2-2 2 3zM21 11l2-3 2 2zM14 14c3 3 9 3 12 0-1 6-11 6-12 0z" fill="#4a1c50"/><path d="M34 7c0-3 1-3 2-2l-1 3z" fill="#5c9a2c"/><ellipse cx="36" cy="15" rx="9" ry="7.500" fill="#e4503c"/><path d="M31 12l2-1 1 3zM37 13l2-2 2 2zM30 16c3 2 9 2 12 0-2 6-10 6-12 0z" fill="#4a1c50"/><path d="M43 2l4 2 2 5-2 4-2-4z" fill="#f29a2e"/></svg></label>
    <button aria-label="Task view"><svg width="24" height="24"><path d="M0 7h18v15H0z" fill="url(#gDark)"/><path d="M7 1h17v15H7z" fill="#fff" opacity=".72"/></svg></button>
    <button aria-label="Copilot"><svg width="24" height="24"><path d="M7 1h9c2 0 3 2 2 4l-1 2c-4-1-5 1-6 4l-2 6H4c-4 0-4-3-3-6l2-7c1-2 2-3 4-3z" fill="url(#gCop1)"/><path d="M17 23H8c-2 0-3-2-2-4l1-2c4 1 5-1 6-4l2-6h5c4 0 4 3 3 6l-2 7c-1 2-2 3-4 3z" fill="url(#gCop2)"/></svg></button>
    <button class="run" aria-label="File Explorer"><svg width="24" height="24"><path d="M0 3c0-1 1-2 2-2h6l3 3h13v6H0z" fill="#d99a0b"/><path d="M0 6h9l2-2h12l1 1v16c0 1-1 1-1 1H1l-1-1z" fill="url(#gFolder)"/><path d="M4 22v-5c0-1 1-2 2-2h12c1 0 2 1 2 2v5z" fill="#1b7fd4"/></svg></button>
    <button aria-label="Microsoft Store"><svg width="24" height="24"><path d="M6.500 6V1.500h11V6" fill="none" stroke="#2fb4ef" stroke-width="2"/><path d="M1 5h22v16a3 3 0 0 1-3 3H4a3 3 0 0 1-3-3z" fill="url(#gBag)"/><path d="M8 9.500h4v4H8z" fill="#f25022"/><path d="M13 9.500h4v4h-4z" fill="#7fba00"/><path d="M8 14.500h4v4H8z" fill="#00a4ef"/><path d="M13 14.500h4v4h-4z" fill="#ffb900"/></svg></button>
    <button aria-label="Get Help"><svg width="30" height="30"><circle cx="13" cy="16" r="11" fill="#0d95d8" stroke="#fff" stroke-width="1.500"/><path d="M9.500 13c0-5 8-5 7.500 0-.2 2.500-4 2.500-4 5.500M13 20.500v2.500" fill="none" stroke="#fff" stroke-width="2.400"/><circle cx="22" cy="8" r="8" fill="#ffc20e"/></svg></button>
    <button aria-label="McAfee"><svg width="24" height="24"><path d="M1 0l11 5.500L23 0v19l-11 5-11-5z" fill="#c62f2f"/><path d="M5.500 7L12 11l6.500-4v9L12 19l-6.500-3z" fill="#d8dcec"/></svg></button>
    <button aria-label="LinkedIn"><svg width="22" height="22"><rect width="22" height="22" rx="1.500" fill="#0a66c2"/><path d="M5.200 8.500v10M10 8.500v10M10 13c0-4 6-4 6 0v5.500" fill="none" stroke="#fff" stroke-width="2.800"/><circle cx="5.200" cy="5" r="1.700" fill="#fff"/></svg></button>
    <button aria-label="Assistant"><svg width="24" height="24"><path d="M12 1h11v6c2 8-3 15-11 15S1 18 1 11 6 1 12 1z" fill="#1673ee"/><circle cx="11.500" cy="12.500" r="9.500" fill="#d9f1ff"/><circle cx="11.500" cy="12.500" r="7.500" fill="url(#gBlue)"/></svg></button>
    <button aria-label="Brackets"><svg width="24" height="24"><rect x="1" y="1" width="22" height="22" rx="3" fill="#1a84b8"/><rect x="3.500" y="3.500" width="17" height="16" fill="#f2f2f2"/><path d="M5 5h14v13H5z" fill="#4a4a4a"/><path d="M11 8H8.500v7H11M13 8h2.500v7H13" fill="none" stroke="#f2f2f2" stroke-width="1.800"/></svg></button>
    <button class="run" aria-label="GitHub Desktop"><svg width="24" height="24"><circle cx="12" cy="12" r="11" fill="url(#gGit)"/><circle cx="12" cy="12" r="8" fill="#efe6f5"/><path d="M8 6l2 1.500h4L16 6c1 2 1.500 7-1 8.500-1 .5-1.500 1-1.500 5.500h-3c0-2 0-2-2-2.500L7 16c2 1 2.500.5 3-1-3-1.500-3.500-6-2-9z" fill="#6f2c93"/></svg></button>
    <button class="run" aria-label="Chrome"><svg width="24" height="24"><circle cx="12" cy="12" r="12" fill="#e8453c"/><path d="M1.600 6A12 12 0 0 0 12 24l5.200-9L12 12z" fill="#34a853"/><path d="M22.400 6A12 12 0 0 1 12 24l5.200-9L12 6z" fill="#fbc116"/><circle cx="12" cy="12" r="6" fill="#fff"/><circle cx="12" cy="12" r="4.700" fill="#3b7de9"/></svg></button>
    <button class="run" aria-label="Edge"><svg width="24" height="24"><circle cx="12" cy="12" r="12" fill="#1268b4"/><path d="M0 12C0-3 24-4 24 11c0 5-7 6-9 3 1-4-1-6-4-6C5 8 1 10 0 12z" fill="url(#gEdge)"/><path d="M9 10c-4 6 1 14 11 11-6 5-17 3-17-5 0-4 3-6 6-6z" fill="#0b4d94"/><path d="M13 10c2 1 3 3 2 4 1 4 6 4 8 2l-2 4c-7 1-12-6-8-10z" fill="#d9e2f0"/></svg></button>
    <button class="run" aria-label="Visual Studio Code"><svg width="24" height="24"><path d="M1 8l2-2 14 11v5L1 10zM1 16l2 2L17 7V2L1 14z" fill="#0f7bc4"/><path d="M17 0l7 3v18l-7 3z" fill="#2aa5f0"/></svg></button>
    <button class="run active" aria-label="Tableau"><svg width="22" height="22"><use href="#i-tabblue"/></svg></button>
  </div>
  <div class="tray">
    <button aria-label="Hidden icons"><svg width="12" height="12"><path d="M1 8.500l5-5 5 5" fill="none" stroke="#222" stroke-width="1.400"/></svg></button>
    <button aria-label="OneDrive"><svg width="18" height="16"><path d="M4 11a3.500 3.500 0 0 1 0-6c2-5 9-4 9 0l-5 6z" fill="#888" stroke="#444"/><circle cx="12" cy="10" r="4.500" fill="#fddc05"/><path d="M12 7.500v3M12 11.500v1.500" stroke="#222" stroke-width="1.200"/></svg></button>
    <button class="net" aria-label="Network and volume"><svg width="16" height="14"><g fill="none" stroke="#222" stroke-width="1.200"><path d="M1 5c4-4 10-4 14 0M3 7.500c3-3 7-3 10 0M5 10c2-2 4-2 6 0"/></g><circle cx="8" cy="11.500" r="1.500" fill="#222"/></svg><svg width="16" height="14"><path d="M1 5h2.500L7 2v10L3.500 9H1zM9 5c1 1 1 3 0 4M11 3.500c2 2 2 5 0 7" fill="none" stroke="#222"/><path d="M13 2c3 3 3 7 0 10" fill="none" stroke="#aaa"/></svg></button>
    <button class="clock"><time>12:00 AM<br>11/1/2024</time><svg width="14" height="16"><path d="M7 1c3 0 5 2 5 5v4l1.500 2.500H.5L2 10V6c0-3 2-5 5-5zM5 13.500h4c-.5 2-3.500 2-4 0z" fill="#003d8f"/></svg></button>
  </div>
</div>
</body>
</html>
```
FILE: styles.css
```css
* { box-sizing: border-box; }
body {
  margin: 0;
  min-height: 100vh;
  display: flex;
  flex-direction: column;
  background: #f4f4f4;
  color: #333;
  font: 13px/20px Roboto, "Liberation Sans", sans-serif;
}
button { border: 0; padding: 0; background: none; color: inherit; font: inherit; display: flex; align-items: center; justify-content: center; white-space: nowrap; }
h1, h2, h3, p, ul, dl, dd { margin: 0; padding: 0; font-weight: 400; }
ul { list-style: none; }
svg { flex: none; display: block; }
.defs { position: absolute; width: 0; height: 0; }

/* window frame */
.titlebar { display: flex; align-items: center; height: 23px; padding-left: 2px; gap: 6px; background: #eef3fb; color: #000; }
.titlebar h1, .menubar { font: 12px/20px Roboto, "Noto Sans", sans-serif; }
.winctl { margin-left: auto; display: flex; padding-right: 2px; }
.winctl button { width: 46px; height: 20px; }
.menubar { display: flex; gap: 16px; height: 20px; padding: 0 8px; background: #fff; color: #000; }

/* toolbar */
.toolbar { display: flex; align-items: center; height: 41px; border-top: 1px solid #eee; color: #555; }
.logo { width: 47px; }
.tg { display: flex; align-items: center; height: 34px; padding: 0 7px 0 6px; border-left: 1px solid #d4d4d4; }
.t { width: 32px; height: 30px; }
.n { width: 28px; }
.c { width: 12px; height: 30px; }
.off { color: #b4b4b4; }
.on { width: 30px; background: #e6e6e6; }
.fit { display: flex; align-items: center; width: 104px; height: 23px; margin: 0 7px 0 10px; padding-right: 5px; border: 1px solid #d4d4d4; border-radius: 2px; color: #ccc; }
.fit select { flex: 1; min-width: 0; appearance: none; border: 0; background: none; }
.tr { margin-left: auto; display: flex; align-items: center; padding-right: 29px; gap: 12px; }
.showme { gap: 4px; font-size: 14px; color: #222; }

/* columns of the workspace */
.main { flex: 1; display: flex; gap: 6px; padding-right: 6px; }
.data { width: 210px; background: #fff; border-right: 1px solid #d4d4d4; color: #333; }
.dtabs { display: flex; height: 27px; font-size: 14px; }
.dtabs button { border-top: 1px solid #d4d4d4; }
.dtabs .sel { width: 77px; padding-right: 12px; font-weight: 700; color: #000; }
.dtabs .ana { flex: 1; justify-content: space-between; padding: 0 7px 0 12px; border-left: 1px solid #d4d4d4; border-bottom: 1px solid #d4d4d4; background: #fafafa; }
.source { display: flex; align-items: center; gap: 4px; height: 30px; padding-left: 22px; border-bottom: 1px solid #e0e0e0; color: #555; }
.find { display: flex; align-items: center; height: 38px; padding-left: 8px; gap: 4px; color: #555; }
.box { display: flex; align-items: center; width: 130px; height: 23px; padding: 0 4px 0 6px; border: 1px solid #c4c4c4; border-radius: 2px; }
input { flex: 1; min-width: 0; border: 0; padding: 0; background: none; font: inherit; outline: 0; }
.box input::placeholder { color: #aaa; opacity: 1; }
.find .lst { gap: 12px; padding: 3px 0 3px 6px; border-left: 1px solid #d4d4d4; }
.data h2 { padding: 0 18px 3px; font-size: 14px; font-weight: 700; color: #000; line-height: 19px; }
.fields li { display: flex; align-items: center; height: 21px; }
.fields svg, .fields b { width: 16px; height: 12px; margin: 0 10px 0 21px; flex: none; }
.fields b { font-size: 10px; line-height: 13px; }
.dim svg, .dim b { color: #3c7d9c; }
.mea svg { color: #3aa57c; }
.mea { margin: 1px 6px 0 0; }
.mea::before { content: ""; display: block; margin-left: 15px; border-top: 1px solid #d8d8d8; }

.cards { width: 154px; display: flex; flex-direction: column; gap: 6px; color: #555; }
.card { border: 1px solid #d4d4d4; background: #fafafa; }
.card h3 { padding: 5px 6px; font-size: 13px; }
.pages { height: 62px; }
.filters { height: 78px; padding: 0 4px; }
.filters h3 { padding: 5px 2px 7px; }
.marks { height: 270px; padding: 0 6px; }
.marks h3 { padding: 5px 0 10px; }
.pill { justify-content: flex-start; height: 20px; padding: 0 10px; border-radius: 10px; background: #00b180; color: #fff; }
.blue { background: #4996b2; }
.filters .pill { width: 100%; }
.marktype { width: 100%; height: 21px; padding-left: 10px; gap: 5px; border: 1px solid #c4c4c4; }
.marktype span { flex: 1; text-align: left; color: #666; }
.marktype em { display: flex; width: 18px; height: 19px; align-items: center; justify-content: center; border-left: 1px solid #d4d4d4; }
.shelfgrid { display: grid; grid-template-columns: repeat(3, 1fr); gap: 6px; padding-top: 6px; }
.shelfgrid button { flex-direction: column; height: 42px; gap: 4px; padding-top: 6px; border: 1px solid #d4d4d4; font-size: 11px; line-height: 14px; }
.shelfgrid svg, .enc svg { width: 16px; height: 16px; }
.enc { display: grid; gap: 3px; padding: 15px 4px 0 6px; }
.enc li { display: flex; align-items: center; gap: 3px; }
.enc .pill { flex: 1; }

.work { flex: 1; min-width: 0; display: flex; flex-direction: column; gap: 6px; padding-bottom: 6px; }
.shelf { display: flex; align-items: center; gap: 2px; height: 28px; border: 1px solid #d4d4d4; background: #fafafa; }
.shelf span { display: flex; align-items: center; gap: 6px; width: 125px; height: 26px; padding-left: 7px; border-right: 1px solid #d4d4d4; color: #555; }
.shelf .pill { width: 148px; }
.viewrow { flex: 1; display: flex; gap: 6px; }
.view { flex: 1; min-width: 0; padding: 9px 4px 10px 5px; border: 1px solid #b4b4b4; background: #fff; }
.view h2 { padding: 0 5px 1px; font: 600 20px/32px "Noto Sans", sans-serif; color: #e15759; }
.map { position: relative; width: 77%; border: 1px solid #e2e2e2; }
.geo { width: 100%; height: auto; }
.land { fill: #e7e7e7; }
.plain { fill: #ebebeb; }
.lake { fill: #fafafa; }
.prov, .nat { fill: none; stroke-width: 1; }
.prov path, .nat path { vector-effect: non-scaling-stroke; stroke-linejoin: round; }
.prov { stroke: #c0c0c0; }
.nat { stroke: #9c9c9c; }
.names { font: 12px "Noto Sans", sans-serif; fill: #9a9a9a; text-anchor: middle; paint-order: stroke; stroke: #eee; stroke-width: 2px; }
.dots circle { stroke: #fff; stroke-opacity: .6; }
.dots .hot { fill: #d7b5a6; stroke: #111; stroke-opacity: 1; }
.mapctl { position: absolute; left: 9px; top: 8px; display: grid; gap: 9px; color: #555; }
.solo, .zoom { width: 28px; border: 1px solid #b4b4b4; background: rgba(245, 245, 245, .9); }
.solo { height: 28px; }
.zoom { display: grid; padding: 1px 2px; }
.zoom button { height: 25px; }
.zoom .pin { height: 22px; border: 1px solid #aaa; background: #e4e4e4; }
.zoom .play { height: 32px; margin-top: 4px; border-top: 1px solid #ccc; }
.map small { position: absolute; left: 0; bottom: 0; padding: 0 5px; font: 700 11px/18px "Liberation Sans", sans-serif; color: #666; }
.tip { position: absolute; left: 584px; top: 199px; width: 153px; display: grid; grid-template-columns: 55px 1fr; padding: 8px 8px 7px; border: 1px solid #ccc; background: #fff; box-shadow: 2px 2px 3px rgba(0, 0, 0, .3); font: 13px/18px "Noto Sans", sans-serif; white-space: nowrap; }
.tip dt { color: #888; }
.tip dd { font-weight: 500; color: #222; }

.legends { width: 154px; display: grid; align-content: start; gap: 6px; }
.legend { border: 1px solid #d4d4d4; background: #fff; }
.legend h3 { padding: 5px 6px; background: #fafafa; color: #555; font-size: 13px; }
.legend ul { padding: 0 3px 1px; font: 12px/20px "Noto Sans", sans-serif; color: #444; }
.legend li { display: flex; align-items: center; height: 20px; gap: 5px; }
.legend i { width: 14px; height: 14px; }
.sizes h3 { padding-bottom: 4px; }
.sizes li { gap: 0; }
.sizes svg { width: 22px; height: 20px; }
.sizes circle { fill: #d6d6d6; stroke: #aaa; }
.sizes span { width: 35px; text-align: right; }
.k1 { background: #4e79a7; } .k2 { background: #86bcb6; } .k3 { background: #ff9d9a; } .k4 { background: #76b7b2; }
.k5 { background: #d4a6c8; } .k6 { background: #d7b5a6; } .k7 { background: #a0cbe8; } .k8 { background: #ff9da7; }

/* sheet tabs and status */
.sheets { display: flex; height: 30px; border-top: 1px solid #c8c8c8; border-bottom: 1px solid #d4d4d4; background: #e6e6e6; color: #666; }
.sheets button { border-right: 1px solid #c8c8c8; }
.sheets .ds { width: 131px; justify-content: flex-start; padding-left: 9px; gap: 5px; }
.sheets .cur { width: 86px; background: #fafafa; font-weight: 700; color: #555; }
.sheets .add { width: 32px; }
.status { display: flex; align-items: center; height: 21px; padding-left: 3px; background: #ebebeb; border-bottom: 1px solid #b8b8c0; font-size: 12px; }
.facts { display: flex; gap: 16px; }
.status .user { margin-left: auto; gap: 8px; width: 127px; height: 20px; border-left: 1px solid #c8c8c8; color: #333; }
.status .cell, .nav, .modes { align-self: stretch; border-left: 1px solid #c8c8c8; width: 27px; }
.status .wide { width: 47px; }
.status .nav { width: 71px; display: flex; align-items: center; justify-content: space-around; padding: 0 4px; }
.status .modes { width: 68px; display: flex; align-items: center; justify-content: space-between; padding: 0 6px 0 8px; }

/* desktop taskbar */
.taskbar { display: grid; grid-template-columns: 1fr auto 1fr; align-items: center; height: 48px; background: linear-gradient(90deg, #d3e0f3 0, #dadcf0 20%, #f0d6ea 29%, #dddcf0 36%, #d5dfef 50%, #d6dbeb 80%, #d3e0f3 90%, #d8dcee 100%); font: 12px/16px "Open Sans", "Noto Sans", sans-serif; color: #111; }
.weather { display: flex; align-items: center; gap: 8px; padding-left: 20px; }
.weather span { color: #555; }
.apps { display: flex; align-items: center; }
.apps > button { position: relative; width: 44px; height: 38px; }
.tsearch { display: flex; align-items: center; gap: 9px; width: 218px; height: 32px; margin: 0 3px 0 4px; padding: 0 2px 0 10px; border: 1px solid #c8c6d8; border-radius: 16px; background: #f6f4fa; font-size: 14px; }
.tsearch input::placeholder { color: #555; opacity: 1; }
.run::after { content: ""; position: absolute; left: 19px; bottom: -2px; width: 6px; height: 3px; border-radius: 2px; background: #888; }
.apps .active { background: #e9eef7; border-radius: 4px; width: 38px; margin: 0 3px; }
.active::after { left: 11px; bottom: 0; width: 16px; background: #0078d4; }
.tray { display: flex; align-items: center; justify-content: flex-end; gap: 16px; padding-right: 21px; text-align: right; }
.net { gap: 7px; }
.clock { gap: 9px; }
```
